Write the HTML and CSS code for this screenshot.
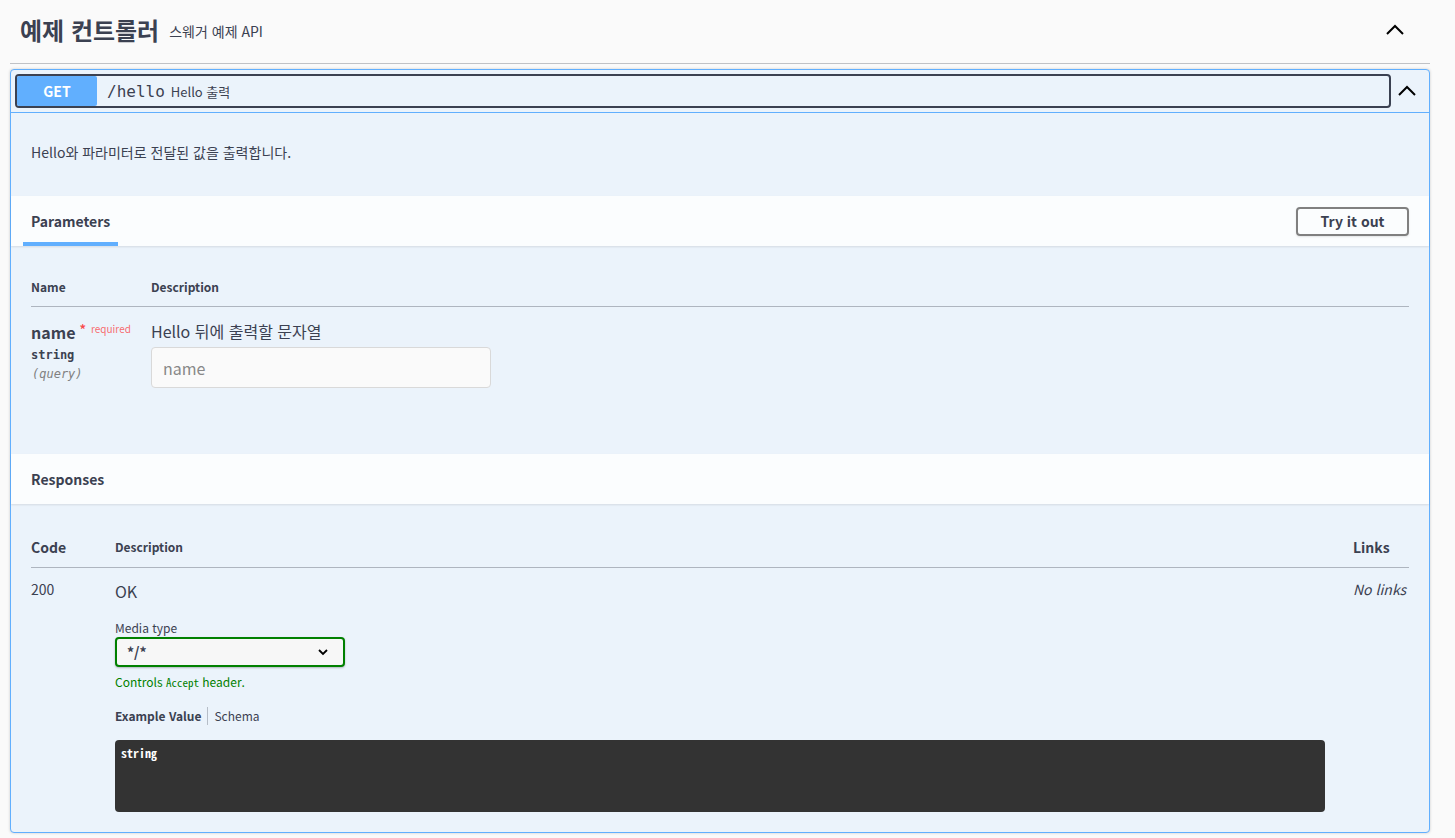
FILE: index.html
```html
<!DOCTYPE html>
<html lang="ko">
<head>
<meta charset="utf-8">
<title>Swagger</title>
<link rel="stylesheet" href="styles.css">
</head>
<body>
<div class="wrap">
  <div class="tag">
    <h3 class="tag-title">예제 컨트롤러</h3>
    <small class="tag-desc">스웨거 예제 API</small>
    <svg class="tag-arrow" width="20" height="20" viewBox="0 0 20 20"><path d="M2 14 L10 6 L18 14" fill="none" stroke="#000" stroke-width="2"/></svg>
  </div>

  <div class="opblock">
    <div class="summary">
      <div class="summary-btn">
        <span class="method">GET</span>
        <span class="path">/hello</span>
        <span class="summary-desc">Hello 출력</span>
      </div>
      <svg class="op-arrow" width="20" height="20" viewBox="0 0 20 20"><path d="M2 14 L10 6 L18 14" fill="none" stroke="#000" stroke-width="2"/></svg>
    </div>

    <div class="op-desc"><p>Hello와 파라미터로 전달된 값을 출력합니다.</p></div>

    <div class="section-header">
      <div class="tab"><span>Parameters</span></div>
      <button class="try">Try it out</button>
    </div>

    <div class="params">
      <div class="prow phead">
        <div class="pcol-name">Name</div>
        <div class="pcol-desc">Description</div>
      </div>
      <div class="prow pbody">
        <div class="pcol-name">
          <div class="pname">name<span class="star">*</span><span class="req">required</span></div>
          <div class="ptype">string</div>
          <div class="pin">(query)</div>
        </div>
        <div class="pcol-desc">
          <div class="pdesc">Hello 뒤에 출력할 문자열</div>
          <div class="pinput">name</div>
        </div>
      </div>
    </div>

    <div class="section-header resp-header">
      <h4 class="resp-title">Responses</h4>
    </div>

    <div class="responses">
      <div class="rrow rhead">
        <div class="rcode code-h">Code</div>
        <div class="rdesc">Description</div>
        <div class="rlinks links-h">Links</div>
      </div>
      <div class="rrow rbody">
        <div class="rcode">200</div>
        <div class="rdesc">
          <div class="ok">OK</div>
          <div class="media-label">Media type</div>
          <div class="select"><span>*/*</span>
            <svg width="12" height="12" viewBox="0 0 12 12"><path d="M2 4 L6 8 L10 4" fill="none" stroke="#000" stroke-width="1.8"/></svg>
          </div>
          <div class="controls">Controls <code>Accept</code> header.</div>
          <div class="ex-tabs"><span class="ex-active">Example Value</span><span class="ex-sep"></span><span class="ex-other">Schema</span></div>
          <div class="codebox">string</div>
        </div>
        <div class="rlinks nolinks">No links</div>
      </div>
    </div>
  </div>
</div>
</body>
</html>
```

FILE: styles.css
```css
* { box-sizing: border-box; }
html, body { margin: 0; padding: 0; }
body {
  background: #fafafa;
  font-family: "Noto Sans CJK KR", "Noto Sans", sans-serif;
  color: #3b4151;
  width: 1455px;
  height: 838px;
  overflow: hidden;
}
.wrap { margin: 0 25px 0 10px; }

.tag {
  height: 64px;
  display: flex;
  align-items: center;
  padding: 0 25px 4px 10px;
  border-bottom: 1px solid rgba(59,65,81,.3);
}
.tag-title { margin: 0; font-size: 24px; font-weight: 700; line-height: 30px; }
.tag-desc { font-size: 14px; margin-left: 10px; line-height: 20px; padding-top: 2px; }
.tag-arrow { margin-left: auto; }

.opblock {
  margin-top: 5px;
  border: 1px solid #61affe;
  border-radius: 4px;
  background: #ebf3fb;
  box-shadow: 0 0 3px rgba(0,0,0,.19);
}
.summary {
  display: flex;
  align-items: center;
  padding: 4px 12px 4px 4px;
  border-bottom: 1px solid #61affe;
}
.summary-btn {
  flex: 1;
  display: flex;
  align-items: center;
  height: 34px;
  border: 2px solid #3b4151;
  border-radius: 4px;
}
.method {
  width: 80px;
  height: 30px;
  background: #61affe;
  color: #fff;
  font-weight: 700;
  font-size: 14px;
  display: flex;
  align-items: center;
  justify-content: center;
  border-radius: 2px;
}
.path {
  font-family: "DejaVu Sans Mono", monospace;
  font-size: 16px;
  font-weight: 400;
  padding: 0 6px 0 10px;
}
.summary-desc { font-size: 13px; }
.op-arrow { margin-left: 6px; }

.op-desc { padding: 13px 20px 18px; }
.op-desc p { margin: 14px 0; font-size: 14px; line-height: 24px; }

.section-header {
  display: flex;
  align-items: center;
  min-height: 50px;
  padding: 0 20px 0 12px;
  background: rgba(255,255,255,.8);
  box-shadow: 0 1px 2px rgba(0,0,0,.1);
}
.tab {
  align-self: stretch;
  display: flex;
  align-items: center;
  padding: 0 8px;
  border-bottom: 4px solid #61affe;
  font-size: 14px;
  font-weight: 700;
  padding-top: 4px;
}
.try {
  margin-left: auto;
  font-family: inherit;
  font-size: 14px;
  font-weight: 700;
  color: #3b4151;
  background: transparent;
  border: 2px solid #808080;
  border-radius: 4px;
  height: 29px;
  width: 113px;
  padding: 0;
  box-shadow: 0 1px 2px rgba(0,0,0,.1);
}

.params { padding: 20px 20px 65px 20px; height: 208px; }
.prow { display: flex; }
.pcol-name { width: 120px; }
.pcol-desc { flex: 1; }
.phead {
  height: 41px;
  align-items: flex-start;
  padding-top: 12px;
  font-size: 12px;
  font-weight: 700;
  border-bottom: 1px solid rgba(59,65,81,.35);
}
.pbody { padding-top: 12px; }
.pname { font-size: 16px; font-weight: 700; line-height: 26px; display: flex; align-items: flex-start; }
.star { color: rgba(255,0,0,.7); font-size: 13px; font-weight: 700; margin-left: 4px; line-height: 20px; }
.req { color: rgba(255,0,0,.6); font-size: 10px; margin-left: 5px; line-height: 20px; font-weight: 400; }
.ptype { font-family: "DejaVu Sans Mono", monospace; font-size: 12px; font-weight: 600; line-height: 18px; margin-top: 1px; }
.pin { font-family: "DejaVu Sans Mono", monospace; font-size: 12px; font-style: italic; color: #808080; line-height: 20px; padding-left: 1px; }
.pdesc { font-size: 16px; line-height: 24px; }
.pinput {
  margin-top: 4px;
  width: 340px;
  height: 41px;
  background: #fafafa;
  border: 1px solid #d9d9d9;
  border-radius: 4px;
  padding: 0 11px;
  display: flex;
  align-items: center;
  font-size: 16px;
  color: #888;
}

.resp-header { padding-left: 20px; }
.resp-title { margin: 0; font-size: 14px; font-weight: 700; }

.responses { padding: 20px 20px 20px 20px; }
.rrow { display: flex; }
.rcode { width: 84px; }
.rdesc { flex: 1; }
.rlinks { width: 56px; }
.rhead {
  height: 44px;
  align-items: center;
  font-size: 12px;
  font-weight: 700;
  border-bottom: 1px solid rgba(59,65,81,.35);
  padding-top: 2px;
}
.code-h, .links-h { font-size: 14px; }
.rbody { padding-top: 10px; }
.rbody .rcode { font-size: 14px; line-height: 22px; }
.ok { font-size: 16px; line-height: 26px; }
.media-label { font-size: 12px; line-height: 16px; margin-top: 16px; }
.select {
  margin-top: 1px;
  width: 230px;
  height: 30px;
  border: 2px solid #008000;
  border-radius: 4px;
  background: #f7f7f7;
  box-shadow: 0 1px 2px rgba(0,0,0,.25);
  display: flex;
  align-items: center;
  justify-content: space-between;
  padding: 0 14px 0 10px;
  font-size: 14px;
  font-weight: 600;
}
.controls { color: #008000; font-size: 12px; line-height: 16px; margin-top: 7px; }
.controls code { font-family: "Noto Sans Mono CJK KR", "DejaVu Sans Mono", monospace; font-size: 11px; }
.ex-tabs { display: flex; align-items: center; font-size: 12px; line-height: 18px; margin-top: 17px; }
.ex-active { font-weight: 700; }
.ex-sep { width: 1px; height: 18px; background: rgba(59,65,81,.3); margin: 0 6px; }
.codebox {
  margin-top: 15px;
  width: 1210px;
  height: 72px;
  background: #333;
  border-radius: 4px;
  color: #fff;
  font-family: "Noto Sans Mono CJK KR", "DejaVu Sans Mono", monospace;
  font-size: 12px;
  font-weight: 600;
  padding: 5px 6px;
  line-height: 16px;
}
.nolinks { font-size: 14px; font-style: italic; line-height: 22px; }
```
